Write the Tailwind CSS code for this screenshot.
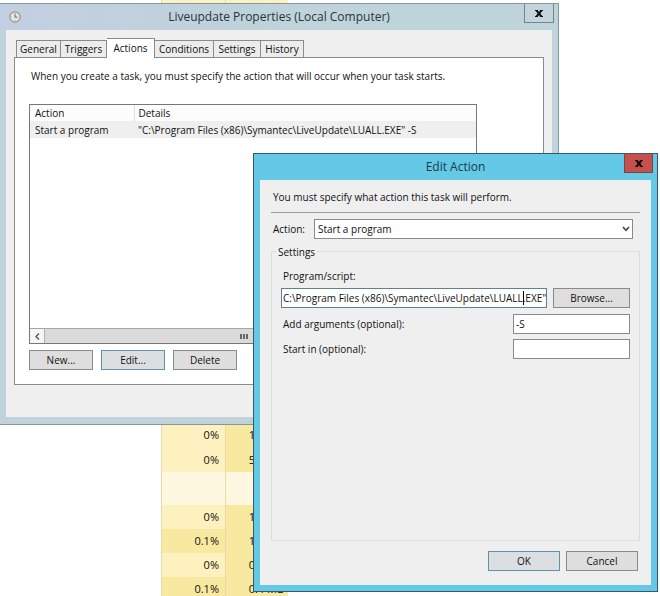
<!DOCTYPE html>
<html lang="en">
<head>
<meta charset="utf-8">
<meta name="viewport" content="width=device-width, initial-scale=1">
<title>Liveupdate Properties (Local Computer)</title>
<script src="https://cdn.jsdelivr.net/npm/@tailwindcss/browser@4"></script>
</head>
<body class="bg-white">
<div class="relative h-screen overflow-hidden font-['Open_Sans','Noto_Sans',sans-serif] text-[10px] leading-4 text-[#111]">

  <!-- Process list behind the windows -->
  <table class="ml-[161px] w-[127px] table-fixed border-collapse text-right text-[11px]">
    <tbody class="bg-[#f7e9a0]">
      <tr class="h-[423px] bg-[#fbf2c6]"><td class="w-16 border-x border-[#e6dba8]"></td><td></td></tr>
      <tr class="h-6"><td class="border-x border-[#e6dba8] bg-[#fdf2bf] pr-1.5">0%</td><td class="pr-1">1.2 MB</td></tr>
      <tr class="h-[25px]"><td class="border-x border-[#e6dba8] bg-[#fdf2bf] pr-1.5">0%</td><td class="pr-1">5.3 MB</td></tr>
      <tr class="h-[33px] bg-[#fff8e1]"><td class="border-x border-[#e6dba8]"></td><td></td></tr>
      <tr class="h-6"><td class="border-x border-[#e6dba8] bg-[#fdf2bf] pr-1.5">0%</td><td class="pr-1">1.1 MB</td></tr>
      <tr class="h-6"><td class="border-x border-[#e6dba8] pr-1.5">0.1%</td><td class="pr-1">1.8 MB</td></tr>
      <tr class="h-6"><td class="border-x border-[#e6dba8] bg-[#fdf2bf] pr-1.5">0%</td><td class="pr-1">0.6 MB</td></tr>
      <tr class="h-6"><td class="border-x border-[#e6dba8] pr-1.5">0.1%</td><td class="pr-1">0.4 MB</td></tr>
    </tbody>
  </table>

  <!-- Properties window -->
  <section class="absolute -left-px right-[101px] top-[3px] border border-[#87959c] bg-[#c0d3da] px-1.5 pb-[7px]">
    <header class="relative -mx-1.5 flex h-[26px] items-center justify-center bg-linear-to-r from-[#c3cfe2] via-[#bed3da] to-[#bed4da]">
      <svg class="absolute left-[9px] top-[7px] size-3" viewBox="0 0 12 12" fill="none"><circle cx="6" cy="6" r="5.2" fill="#e4e6e4" stroke="#9b9584" stroke-width="1.2"/><path d="M6 2.6V6.2H8.6" stroke="#6f6a60"/><path d="M6 9.2v.8M2.2 6h.7" stroke="#a8a494" stroke-width=".8"/></svg>
      <h1 class="text-[12px] leading-5 text-[#2b343a]">Liveupdate Properties (Local Computer)</h1>
      <button type="button" aria-label="Close" class="absolute right-1 top-0 flex h-[19px] w-[30px] items-center justify-center border border-t-0 border-[#75848b] bg-[#c3d4dc]">
        <svg class="h-[7px] w-2" viewBox="0 0 8 7"><path d="M0 0h2.8L4 1.9 5.2 0H8v1H7.2L5.4 3.5 7.2 6H8v1H5.2L4 5.1 2.8 7H0V6h.8l1.8-2.5L.8 1H0z" fill="#111"/></svg>
      </button>
    </header>
    <div class="bg-[#efefef] px-2 pb-8 pt-2">
      <nav class="flex items-end pl-0.5" role="tablist">
        <button type="button" role="tab" class="h-[17px] w-[45px] border border-b-0 border-[#8b8b8b] bg-[#ececec]">General</button>
        <button type="button" role="tab" class="h-[17px] w-[46px] border border-b-0 border-l-0 border-[#8b8b8b] bg-[#ececec]">Triggers</button>
        <button type="button" role="tab" aria-selected="true" class="relative -mb-px h-5 w-[48px] border border-b-0 border-l-0 border-[#8b8b8b] bg-white pb-0.5">Actions</button>
        <button type="button" role="tab" class="h-[17px] w-[59px] border border-b-0 border-l-0 border-[#8b8b8b] bg-[#ececec]">Conditions</button>
        <button type="button" role="tab" class="h-[17px] w-[47px] border border-b-0 border-l-0 border-[#8b8b8b] bg-[#ececec]">Settings</button>
        <button type="button" role="tab" class="h-[17px] w-[43px] border border-b-0 border-l-0 border-[#8b8b8b] bg-[#ececec]">History</button>
      </nav>
      <div class="border border-[#8b8b8b] bg-white px-3.5 pb-3.5 pt-2.5">
        <p class="whitespace-nowrap pl-0.5">When you create a task, you must specify the action that will occur when your task starts.</p>
        <div class="mr-[52px] mt-5 flex h-60 flex-col justify-between border border-[#777]">
          <table class="w-full table-fixed text-left">
            <thead><tr class="h-4 bg-[#fcfcfc]"><th class="w-[104px] border-r border-[#dedede] pl-[5px] font-normal">Action</th><th class="pl-1 font-normal">Details</th></tr></thead>
            <tbody><tr class="h-[17px] bg-[#efefef]"><td class="pl-[5px]">Start a program</td><td class="whitespace-nowrap pl-1">"C:\Program Files (x86)\Symantec\LiveUpdate\LUALL.EXE" -S</td></tr></tbody>
          </table>
          <div class="flex h-[15px] border-t border-[#a6a6a6] bg-[#dadada]">
            <button type="button" aria-label="Scroll left" class="flex w-[15px] items-center justify-center border-r border-[#b0b0b0] bg-[#f6f6f6]">
              <svg class="size-[7px]" viewBox="0 0 7 7" fill="none"><path d="M5 .5 2 3.5l3 3" stroke="#555" stroke-width="1.3"/></svg>
            </button>
            <div class="flex flex-1 items-center justify-center"><svg class="h-[5px] w-2" viewBox="0 0 8 5"><path d="M0 0h2v5H0zM3 0h2v5H3zM6 0h2v5H6z" fill="#666"/></svg></div>
            <div class="w-[34px]"></div>
          </div>
        </div>
        <div class="mt-1.5 flex gap-2">
          <button type="button" class="h-5 w-16 border border-[#8a8a8a] bg-[#dedede]">New...</button>
          <button type="button" class="h-5 w-16 border border-[#5f93ad] bg-[#dcdfe1]">Edit...</button>
          <button type="button" class="h-5 w-16 border border-[#8a8a8a] bg-[#dedede]">Delete</button>
        </div>
      </div>
    </div>
  </section>

  <!-- Edit Action dialog -->
  <section class="absolute left-[253px] right-[2px] top-[153px] border border-[#35596c] bg-[#64c9e7] px-1.5 pb-1.5">
    <header class="relative -mx-1.5 flex h-[26px] items-center justify-center">
      <h2 class="text-[12px] leading-5 text-[#173c4a]">Edit Action</h2>
      <button type="button" aria-label="Close" class="absolute right-1 top-0 flex h-[19px] w-[29px] items-center justify-center border border-t-0 border-[#70484a] bg-[#c7504c]">
        <svg class="h-[7px] w-2" viewBox="0 0 8 7"><path d="M0 0h2.8L4 1.9 5.2 0H8v1H7.2L5.4 3.5 7.2 6H8v1H5.2L4 5.1 2.8 7H0V6h.8l1.8-2.5L.8 1H0z" fill="#160808"/></svg>
      </button>
    </header>
    <form class="bg-[#efefef] px-[11px] pb-3.5 pt-[9px]">
      <p class="pl-0.5">You must specify what action this task will perform.</p>
      <hr class="mt-[7px] border-[#9d9d9d]">
      <div class="mt-1.5 flex items-center pl-0.5 pr-[7px]">
        <label for="action" class="w-[41px]">Action:</label>
        <div class="relative flex-1">
          <select id="action" class="block h-5 w-full appearance-none border border-[#8a8a8a] bg-white pl-[3px]"><option>Start a program</option></select>
          <svg class="pointer-events-none absolute right-[3px] top-[7px] h-[6px] w-2" viewBox="0 0 8 6" fill="none"><path d="M1 1l3 3.4L7 1" stroke="#444" stroke-width="1.6"/></svg>
        </div>
      </div>
      <fieldset class="relative mt-3 h-[290px] border border-[#dcdcdc] px-[9px] pt-4">
        <legend class="absolute -top-2 left-1 bg-[#efefef] px-0.5">Settings</legend>
        <label for="program" class="block pl-0.5">Program/script:</label>
        <div class="mt-1 flex items-center gap-1.5">
          <div class="relative flex-1">
            <input id="program" type="text" value="C:\Program Files (x86)\Symantec\LiveUpdate\LUALL.EXE&quot;" class="block h-5 w-full border border-[#5f8196] bg-white pl-px">
            <span class="absolute right-[23px] top-[3px] h-3.5 w-px bg-black"></span>
          </div>
          <button type="button" class="h-5 w-[77px] border border-[#8a8a8a] bg-[#dedede]">Browse...</button>
        </div>
        <div class="mt-1.5 flex items-center justify-between pl-0.5">
          <label for="args">Add arguments (optional):</label>
          <input id="args" type="text" value="-S" class="h-5 w-[117px] border border-[#8a8a8a] bg-white pl-0.5">
        </div>
        <div class="mt-[5px] flex items-center justify-between pl-0.5">
          <label for="start">Start in (optional):</label>
          <input id="start" type="text" class="h-5 w-[117px] border border-[#8a8a8a] bg-white pl-0.5">
        </div>
      </fieldset>
      <div class="mt-2.5 flex justify-end gap-1.5 pr-0.5">
        <button type="button" class="h-5 w-[72px] border border-[#5f93ad] bg-[#dcdfe1]">OK</button>
        <button type="button" class="h-5 w-[72px] border border-[#8a8a8a] bg-[#dedede]">Cancel</button>
      </div>
    </form>
  </section>
</div>
</body>
</html>
